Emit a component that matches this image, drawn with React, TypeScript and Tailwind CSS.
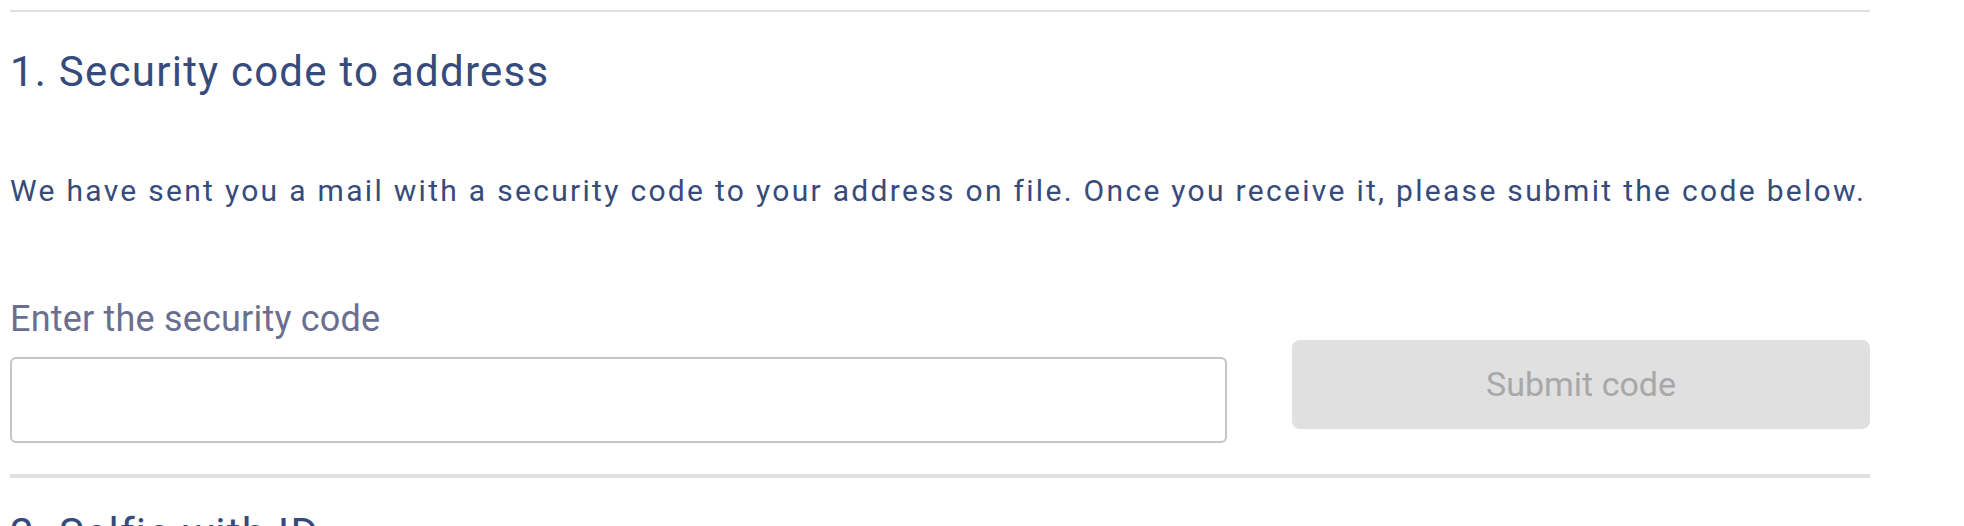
export default function App() {
  return (
    <div className="min-h-screen bg-white pt-[10px] font-['Roboto',sans-serif]">
      <div className="ml-[10px] w-[1860px]">
        <div className="h-[2px] bg-[#e0e0e0]" />

        <h2 className="mt-[35px] text-[42px] leading-[50px] font-normal tracking-[1.25px] text-[#364b7c]">
          1. Security code to address
        </h2>

        <p className="mt-[76px] whitespace-nowrap text-[30px] leading-[36px] tracking-[2.3px] text-[#364b7c]">
          We have sent you a mail with a security code to your address on file. Once you receive it, please submit the code below.
        </p>

        <div className="mt-[89px] flex items-start gap-[65px]">
          <div className="flex-1">
            <label className="block text-[36px] leading-[42px] tracking-[0.2px] text-[#6b6f8f]">Enter the security code</label>
            <input
              type="text"
              className="mt-[17px] block h-[86px] w-full rounded-[6px] border-2 border-[#c4c4c4] bg-white px-4 text-[30px] outline-none"
            />
          </div>
          <button
            disabled
            className="mt-[42px] h-[89px] w-[578px] rounded-[8px] bg-[#e0e0e0] text-[34px] text-[#a8a8a8]"
          >
            Submit code
          </button>
        </div>

        <div className="mt-[31px] h-[4px] bg-[#e0e0e0]" />

        <h2 className="mt-[31px] text-[42px] leading-[50px] font-normal tracking-[1.25px] text-[#364b7c]">
          2. Selfie with ID
        </h2>
      </div>
    </div>
  );
}
